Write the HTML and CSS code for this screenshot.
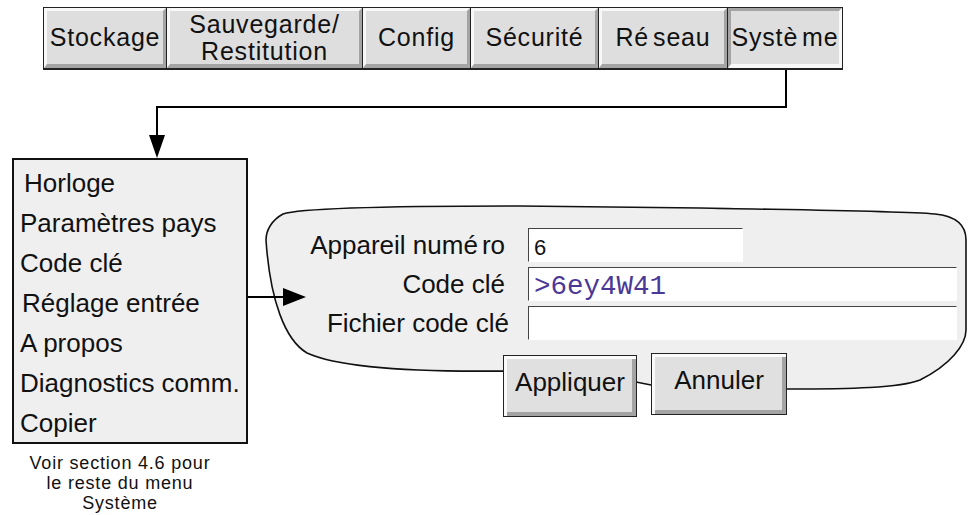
FILE: index.html
```html
<!DOCTYPE html>
<html lang="fr">

<head>
  <meta charset="UTF-8">
  <meta name="viewport" content="width=device-width, initial-scale=1.0">
  <title>Système - Code clé</title>
  <link rel="stylesheet" href="styles.css">
</head>

<body>
  <div class="page">
    <div class="tabs">
      <div class="tab w-stock">Stockage</div>
      <div class="tab two w-save">Sauvegarde/<br>Restitution</div>
      <div class="tab w-config">Config</div>
      <div class="tab w-secu">Sécurité</div>
      <div class="tab w-net">R<span class="acc">é</span>seau</div>
      <div class="tab active w-sys">Syst<span class="acc">è</span>me</div>
    </div>

    <ul class="menu">
      <li class="first">Horloge</li>
      <li>Paramètres pays</li>
      <li>Code clé</li>
      <li class="indent">Réglage entrée</li>
      <li>A propos</li>
      <li>Diagnostics comm.</li>
      <li>Copier</li>
    </ul>
    <p class="note">Voir section 4.6 pour<br>le reste du menu<br>Système</p>

    <div class="dialog">
      <svg class="balloon" width="702" height="215" viewBox="0 0 702 215">
        <path d="M17 9 C34 3, 134 1, 254 1 L434 3 C534 5, 634 6, 669 9 C689 11, 700 20, 700 35 L700 125 C700 140, 684 160, 654 175 C634 183, 584 184, 521 184 L385 180 L370 177 L237 166 C154 167, 74 163, 41 148 C19 135, 4 95, 0 35 C0 25, 6 15, 17 9 Z" />
      </svg>
      <div class="fields">
        <label>Appareil num<span class="acc">é</span>ro</label>
        <div class="field short">6</div>
        <label>Code clé</label>
        <div class="field code">&gt;6ey4W41</div>
        <label class="wide">Fichier code clé</label>
        <div class="field"></div>
      </div>
      <div class="actions">
        <button type="button" class="apply">Appliquer</button>
        <button type="button" class="cancel">Annuler</button>
      </div>
    </div>

    <svg class="links" width="968" height="515" viewBox="0 0 968 515">
      <polyline points="786,70 786,107 157,107 157,137" />
      <polygon class="head" points="149,135 165,135 157,158" />
      <line x1="248" y1="297" x2="285" y2="297" />
      <polygon class="head" points="283,288 283,306 306,297" />
    </svg>
  </div>
</body>

</html>
```

FILE: styles.css
```css
body {
  margin: 0;
  font-family: "Liberation Sans", Arial, sans-serif;
  color: #111;
  background-color: #fff;
}

.page {
  position: relative;
  width: 968px;
  height: 515px;
  overflow: hidden;
}

/* tab bar */
.tabs {
  display: flex;
  gap: 1px;
  width: 800px;
  height: 63px;
  margin: 7px 0 0 43px;
  box-sizing: border-box;
  border: 1px solid #222;
  border-bottom-width: 2px;
  background-color: #222;
}

.tab {
  display: flex;
  align-items: center;
  justify-content: center;
  box-sizing: border-box;
  height: 100%;
  border-style: solid;
  border-width: 3px 3px 4px 3px;
  border-color: #f8f8f8 #a4a4a4 #a4a4a4 #f8f8f8;
  background-color: #dedede;
  font-size: 25px;
  letter-spacing: 0.8px;
  white-space: nowrap;
  text-align: center;
}

.tab.two {
  line-height: 27px;
}

.tab.active {
  border-color: #a4a4a4 #f8f8f8 #f8f8f8 #a4a4a4;
}

.w-stock { width: 122px; }
.w-save { width: 195px; }
.w-config { width: 107px; }
.w-secu { width: 127px; }
.w-net { width: 128px; }
.w-sys { width: 114px; }

.acc {
  margin-right: 4px;
}

/* left menu */
.menu {
  position: absolute;
  left: 12px;
  top: 158px;
  width: 236px;
  height: 286px;
  box-sizing: border-box;
  margin: 0;
  padding: 3px 0 0 6px;
  list-style: none;
  border: 2px solid #111;
  background-color: #efefef;
}

.menu li {
  font-size: 26px;
  line-height: 40px;
  white-space: nowrap;
}

.menu li.first {
  padding-left: 4px;
}

.menu li.indent {
  padding-left: 2px;
}

.note {
  position: absolute;
  left: 20px;
  top: 453px;
  width: 200px;
  margin: 0;
  font-size: 18px;
  letter-spacing: 0.8px;
  line-height: 20px;
  text-align: center;
}

/* key code dialog */
.dialog {
  position: absolute;
  left: 266px;
  top: 205px;
  width: 702px;
  height: 215px;
}

.balloon {
  position: absolute;
  left: 0;
  top: 0;
  overflow: visible;
}

.balloon path {
  fill: #efefef;
  stroke: #111;
  stroke-width: 1.6;
}

.fields {
  position: relative;
  display: grid;
  grid-template-columns: 239px 429px;
  grid-auto-rows: 34px;
  column-gap: 23px;
  row-gap: 5px;
  padding-top: 23px;
}

.fields label {
  font-size: 26px;
  line-height: 34px;
  text-align: right;
  white-space: nowrap;
}

.fields label.wide {
  margin-right: -4px;
}

.field {
  box-sizing: border-box;
  height: 34px;
  padding: 8px 5px 0;
  border-style: solid;
  border-width: 1px;
  border-color: #444 #fff #fff #444;
  background-color: #fff;
  font-size: 22px;
  line-height: 22px;
  overflow: hidden;
}

.field.short {
  width: 215px;
}

.field.code {
  padding-top: 5px;
  font-family: "Liberation Mono", "Courier New", monospace;
  font-size: 27.5px;
  line-height: 28px;
  color: #4b3896;
}

.actions {
  position: relative;
  display: flex;
  gap: 14px;
  margin-top: 14px;
  padding-left: 237px;
}

.actions button {
  width: 134px;
  height: 62px;
  padding: 0 0 8px;
  border: 1px solid #222;
  background-color: #e0e0e0;
  box-shadow: inset 3px 3px 0 #fafafa, inset -4px -4px 0 #a4a4a4;
  font-family: "Liberation Sans", Arial, sans-serif;
  font-size: 26px;
  color: #111;
}

.actions .apply {
  margin-top: 1px;
}

.actions .cancel {
  width: 136px;
  margin-top: -1px;
}

/* connectors */
.links {
  position: absolute;
  left: 0;
  top: 0;
  pointer-events: none;
}

.links polyline,
.links line {
  fill: none;
  stroke: #000;
  stroke-width: 2;
}

.links .head {
  fill: #000;
}
```
